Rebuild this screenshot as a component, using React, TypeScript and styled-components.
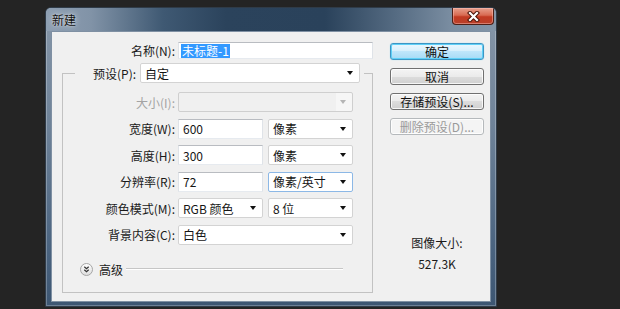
import React from 'react';
import styled, {createGlobalStyle} from 'styled-components';

const GlobalStyle = createGlobalStyle`
    html, body {
        margin: 0;
        padding: 0;
        background: #242424;
    }
    body {
        width: 620px;
        height: 309px;
        overflow: hidden;
        font-family: "Noto Sans CJK SC", "Microsoft YaHei", sans-serif;
        font-size: 12px;
        color: #151515;
    }
    * {
        box-sizing: border-box;
    }
`;

const Page = styled.div`
    height: 309px;
    padding: 7px 0 0 45px;
`;

const Window = styled.div`
    width: 452px;
    height: 300px;
    display: flex;
    flex-direction: column;
    border: 1px solid #2f3b48;
    border-radius: 6px 6px 0 0;
    background: linear-gradient(180deg, #8797a9 0%, #6e8298 40%, #4b6480 80%, #3d5672 100%);
    box-shadow: inset 0 0 0 1px rgba(255, 255, 255, 0.25);
    overflow: hidden;
`;

const TitleBar = styled.div`
    height: 23px;
    flex: none;
    display: flex;
    align-items: flex-start;
    padding: 0 2px 0 6px;
    background: linear-gradient(
        90deg,
        #8e9fb2 0%,
        #8193a7 10%,
        #3f5973 26%,
        #2b435c 40%,
        #2a425b 62%,
        #566c83 78%,
        #7a8da1 90%,
        #8395a8 100%
    );
`;

const Title = styled.span`
    line-height: 23px;
    font-size: 12px;
    color: #111;
    text-shadow: 0 0 6px rgba(255, 255, 255, 0.7), 0 0 2px rgba(255, 255, 255, 0.6);
`;

const CloseButton = styled.div`
    margin-left: auto;
    width: 42px;
    height: 17px;
    display: flex;
    align-items: center;
    justify-content: center;
    border: 1px solid #4e1f16;
    border-top: none;
    border-radius: 0 0 4px 4px;
    background: linear-gradient(180deg, #e8a08d 0%, #d86a52 45%, #c23a22 55%, #b9402a 100%);
    box-shadow: inset 0 0 0 1px rgba(255, 200, 190, 0.45);
`;

const Client = styled.div`
    margin: 0 5px;
    height: 271px;
    flex: none;
    display: flex;
    border: 1px solid #7f90a3;
    background: #f0f0f0;
`;

const LeftColumn = styled.div`
    width: 321px;
    padding-top: 10px;
`;

const RightColumn = styled.div`
    width: 94px;
    margin-left: 17px;
    padding-top: 11px;
    display: flex;
    flex-direction: column;
    gap: 8px;
`;

const Row = styled.div<{$height?: number}>`
    display: flex;
    align-items: center;
    height: ${props => props.$height ?? 20}px;
`;

const Label = styled.span<{$width?: number; $disabled?: boolean}>`
    width: ${props => (props.$width ? `${props.$width}px` : 'auto')};
    flex: none;
    text-align: right;
    margin-right: ${props => (props.$width ? 3 : 4)}px;
    white-space: nowrap;
    color: ${props => (props.$disabled ? '#a3a3a3' : '#1a1a1a')};
`;

const TextBox = styled.div<{$width: number; $height?: number}>`
    width: ${props => props.$width}px;
    height: ${props => props.$height ?? 20}px;
    display: flex;
    align-items: center;
    padding-left: 4px;
    background: #fff;
    border: 1px solid;
    border-color: #b9bcc1 #dfe3e8 #e6eaef #dfe3e8;
    white-space: nowrap;
`;

const NameBox = styled(TextBox)`
    padding-left: 2px;
`;

const Selected = styled.span`
    background: #3399ff;
    color: #fff;
    padding: 0 1px;
    line-height: 14px;
`;

const Select = styled.div<{$width: number; $disabled?: boolean; $focused?: boolean}>`
    width: ${props => props.$width}px;
    height: 20px;
    display: flex;
    align-items: center;
    justify-content: space-between;
    padding: 0 4px 0 4px;
    border: 1px solid ${props => (props.$focused ? '#8cb8e6' : props.$disabled ? '#cfcfcf' : '#d3d3d3')};
    border-radius: 2px;
    background: ${props =>
        props.$disabled
            ? 'linear-gradient(90deg, #f0f0f0 0, #f0f0f0 calc(100% - 16px), #f6f6f6 calc(100% - 16px))'
            : '#fff'};
    white-space: nowrap;
`;

const Arrow = styled.span<{$disabled?: boolean}>`
    width: 0;
    height: 0;
    margin-right: 2px;
    border-left: 3.5px solid transparent;
    border-right: 3.5px solid transparent;
    border-top: 4px solid ${props => (props.$disabled ? '#b5b5b5' : '#111')};
`;

const GroupBox = styled.fieldset`
    margin: 4px 0 0 10px;
    padding: 0;
    width: 311px;
    min-inline-size: 0;
    border: 1px solid #c2c2c2;
`;

const Legend = styled.legend`
    margin-left: 12px;
    padding: 0 4px 0 18px;
    height: 20px;
    display: flex;
    align-items: center;
`;

const Rows = styled.div`
    display: flex;
    flex-direction: column;
    gap: 6.5px;
    padding-top: 9px;
`;

const AdvancedRow = styled.div`
    display: flex;
    align-items: center;
    height: 14px;
    margin-top: 17.5px;
    margin-bottom: 16px;
    padding-left: 17px;
`;

const AdvancedText = styled.span`
    margin-left: 6px;
    color: #1a1a1a;
`;

const Rule = styled.div`
    width: 217px;
    height: 2px;
    margin-left: 3px;
    border-top: 1px solid #c6c6c6;
    border-bottom: 1px solid #ffffff;
`;

const Button = styled.div<{$primary?: boolean; $disabled?: boolean}>`
    height: 17px;
    display: flex;
    align-items: center;
    justify-content: center;
    border-radius: 3px;
    font-size: 12px;
    line-height: 15px;
    border: 1px solid ${props => (props.$primary ? '#3d95c4' : props.$disabled ? '#b5b9bc' : '#707070')};
    color: ${props => (props.$disabled ? '#9a9a9a' : '#111')};
    background: ${props =>
        props.$primary
            ? 'linear-gradient(180deg, #eaf7fe 0%, #d6effc 50%, #bfe6fb 50%, #a6dbf6 100%)'
            : props.$disabled
            ? '#f4f4f4'
            : 'linear-gradient(180deg, #f4f4f4 0%, #ebebeb 50%, #dddddd 50%, #d0d0d0 100%)'};
    box-shadow: ${props =>
        props.$primary
            ? 'inset 0 0 0 1px #5fd0f7, 0 0 1px #7fd6f5'
            : 'inset 0 0 0 1px rgba(255, 255, 255, 0.8)'};
`;

const SizeInfo = styled.div`
    margin-top: 92px;
    display: flex;
    flex-direction: column;
    align-items: center;
    gap: 5px;
    line-height: 16px;
    color: #1a1a1a;
`;

const CloseGlyph = () => (
    <svg width="13" height="11" viewBox="0 0 13 11">
        <path d="M3 2 L10 9 M10 2 L3 9" stroke="#4a1409" strokeWidth="4.2" strokeLinecap="square" />
        <path d="M3 2 L10 9 M10 2 L3 9" stroke="#ffffff" strokeWidth="2.2" strokeLinecap="square" />
    </svg>
);

const ExpandIcon = () => (
    <svg width="13" height="13" viewBox="0 0 13 13">
        <defs>
            <linearGradient id="exp" x1="0" y1="0" x2="0" y2="1">
                <stop offset="0" stopColor="#ffffff" />
                <stop offset="1" stopColor="#dcdcdc" />
            </linearGradient>
        </defs>
        <circle cx="6.5" cy="6.5" r="6" fill="url(#exp)" stroke="#a5a5a5" />
        <path d="M4.3 3.8 L6.5 5.8 L8.7 3.8 M4.3 6.8 L6.5 8.8 L8.7 6.8" fill="none" stroke="#333" strokeWidth="1.2" />
    </svg>
);

const FIELD_LABEL = 112;

const App = () => {
    return (
        <>
            <GlobalStyle />
            <Page>
                <Window>
                    <TitleBar>
                        <Title>新建</Title>
                        <CloseButton>
                            <CloseGlyph />
                        </CloseButton>
                    </TitleBar>
                    <Client>
                        <LeftColumn>
                            <Row $height={17}>
                                <Label $width={123}>名称(N):</Label>
                                <NameBox $width={197} $height={17}>
                                    <Selected>未标题-1</Selected>
                                </NameBox>
                            </Row>
                            <GroupBox>
                                <Legend>
                                    <Label>预设(P):</Label>
                                    <Select $width={220}>
                                        <span>自定</span>
                                        <Arrow />
                                    </Select>
                                </Legend>
                                <Rows>
                                    <Row>
                                        <Label $width={FIELD_LABEL} $disabled>
                                            大小(I):
                                        </Label>
                                        <Select $width={175} $disabled>
                                            <span />
                                            <Arrow $disabled />
                                        </Select>
                                    </Row>
                                    <Row>
                                        <Label $width={FIELD_LABEL}>宽度(W):</Label>
                                        <TextBox $width={85}>600</TextBox>
                                        <Select $width={85} style={{marginLeft: 5}}>
                                            <span>像素</span>
                                            <Arrow />
                                        </Select>
                                    </Row>
                                    <Row>
                                        <Label $width={FIELD_LABEL}>高度(H):</Label>
                                        <TextBox $width={85}>300</TextBox>
                                        <Select $width={85} style={{marginLeft: 5}}>
                                            <span>像素</span>
                                            <Arrow />
                                        </Select>
                                    </Row>
                                    <Row>
                                        <Label $width={FIELD_LABEL}>分辨率(R):</Label>
                                        <TextBox $width={85}>72</TextBox>
                                        <Select $width={85} $focused style={{marginLeft: 5}}>
                                            <span>像素/英寸</span>
                                            <Arrow />
                                        </Select>
                                    </Row>
                                    <Row>
                                        <Label $width={FIELD_LABEL}>颜色模式(M):</Label>
                                        <Select $width={85}>
                                            <span>RGB 颜色</span>
                                            <Arrow />
                                        </Select>
                                        <Select $width={85} style={{marginLeft: 5}}>
                                            <span>8 位</span>
                                            <Arrow />
                                        </Select>
                                    </Row>
                                    <Row>
                                        <Label $width={FIELD_LABEL}>背景内容(C):</Label>
                                        <Select $width={175}>
                                            <span>白色</span>
                                            <Arrow />
                                        </Select>
                                    </Row>
                                </Rows>
                                <AdvancedRow>
                                    <ExpandIcon />
                                    <AdvancedText>高级</AdvancedText>
                                    <Rule />
                                </AdvancedRow>
                            </GroupBox>
                        </LeftColumn>
                        <RightColumn>
                            <Button $primary>确定</Button>
                            <Button>取消</Button>
                            <Button>存储预设(S)...</Button>
                            <Button $disabled>删除预设(D)...</Button>
                            <SizeInfo>
                                <span>图像大小:</span>
                                <span>527.3K</span>
                            </SizeInfo>
                        </RightColumn>
                    </Client>
                </Window>
            </Page>
        </>
    );
};

export default App;
